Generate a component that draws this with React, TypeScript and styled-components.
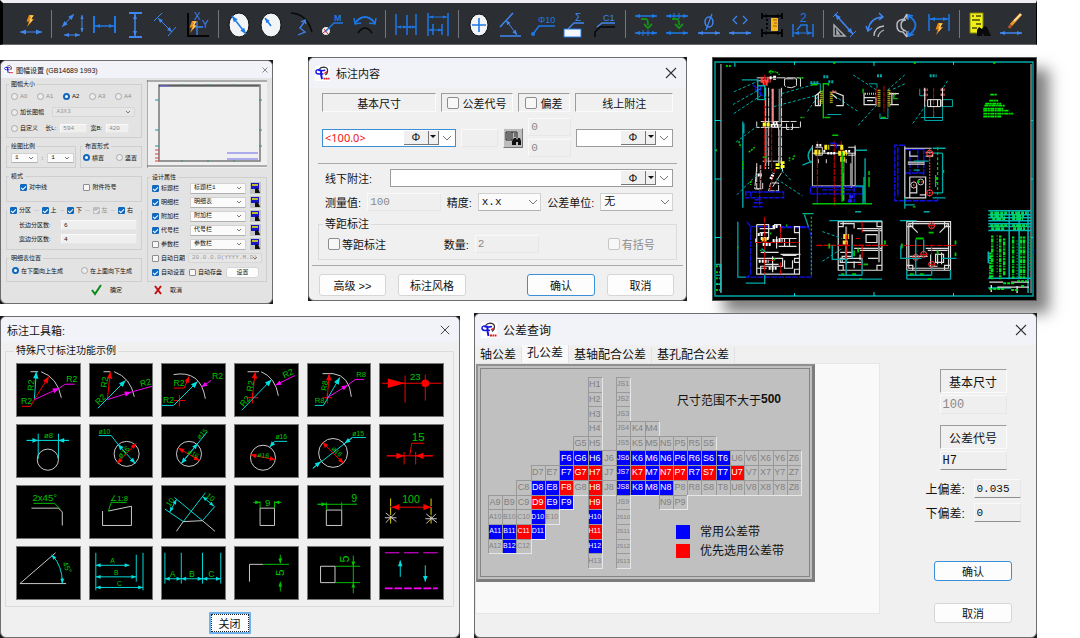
import React from 'react';
import styled, { createGlobalStyle, css } from 'styled-components';

const GlobalStyle = createGlobalStyle`
  * { box-sizing: border-box; }
  body { margin: 0; background: #fff; }
  button, input, select { font: inherit; color: inherit; }
`;

const BLUE = '#1e78e6';
const LBLUE = '#3f86f0';
const CYAN = '#00e0e0';
const GREEN = '#00c400';
const RED = '#f00';
const MAG = '#f0f';
const GREY = '#d0d0d0';

/* ---------- shared window parts ---------- */

const Page = styled.div`
  font-family: 'Liberation Sans', 'Noto Sans CJK SC', sans-serif;
  color: #111;
  padding-right: 43px;
  overflow: hidden;
`;

const TopRow = styled.div`
  display: flex;
  align-items: flex-start;
  padding-top: 12px;
`;

const BottomRow = styled.div`
  display: flex;
  align-items: flex-start;
  gap: 14px;
  padding-top: 9px;
`;

const Slot = styled.div<{ $w: number; $drop?: number; $after?: number }>`
  flex: ${p => p.$w} 1 0;
  min-width: 0;
  margin-top: ${p => p.$drop || 0}px;
  margin-right: ${p => p.$after || 0}px;
`;

const Frame = styled.section`
  background: #1a1a1a;
  position: relative;
`;

const Surface = styled.div<{ $h: number; $bg?: string }>`
  display: flex;
  flex-direction: column;
  min-height: ${p => p.$h}px;
  border: 1px solid #6e6e70;
  border-radius: 6px;
  background: ${p => p.$bg || '#f0f0f0'};
  overflow: hidden;
`;

const TitleBar = styled.header<{ $h: number; $size: number }>`
  display: flex;
  align-items: center;
  gap: ${p => (p.$h < 20 ? 0 : 3)}px;
  height: ${p => p.$h}px;
  padding: 0 ${p => (p.$h < 20 ? 4 : 9)}px 0 ${p => (p.$h < 30 ? 3 : 6)}px;
  background: #f2f3f9;
  font-size: ${p => p.$size}px;
  h2 { margin: 0; flex: 1; font: inherit; white-space: nowrap; padding-left: 3px; }
`;

const IconButton = styled.button`
  display: flex;
  padding: 0;
  border: 0;
  background: none;
`;

const CloseX = ({ s }: { s: number }) => (
  <IconButton aria-label="Close">
    <svg width={s + 2} height={s + 2} viewBox="0 0 12 12">
      <path d="M1 1L11 11M11 1L1 11" stroke="#333" strokeWidth="1.1" fill="none" />
    </svg>
  </IconButton>
);

const Logo = ({ s }: { s: number }) => (
  <svg width={s} height={s} viewBox="0 0 16 16">
    <rect width="16" height="16" fill="#fff" />
    <path d="M4.500 3.500Q6 1.200 9.500 1.200Q13.500 1.500 13.500 5Q13.500 8 11 9.500" stroke="#333" strokeWidth="1.300" fill="none" />
    <path d="M6.500 4.500Q1 3 1 6Q1 8.500 4 8.500Q7 8 9 8.500M3.500 4.500Q7 5.500 11 4.500" stroke="#1414e0" strokeWidth="1.500" fill="none" />
    <path d="M6.500 4.500Q6 9 7.500 14" stroke="#1414e0" strokeWidth="2" fill="none" />
    <path d="M10 8L13 6" stroke="#e01818" strokeWidth="1.500" fill="none" />
    <path d="M9 13.500H15.500" stroke="#e01818" strokeWidth="2" strokeDasharray="2 .5" fill="none" />
  </svg>
);

const Group = styled.fieldset<{ $h?: number; $line?: string }>`
  min-width: 0;
  min-height: ${p => p.$h || 0}px;
  margin: 0;
  padding: 0;
  border: 1px solid ${p => p.$line || '#dcdcdc'};
`;

const Legend = styled.legend<{ $lh: number; $left: number }>`
  margin-left: ${p => p.$left}px;
  padding: 0 2px;
  line-height: ${p => p.$lh}px;
  white-space: nowrap;
`;

const Check = styled.input<{ $s: number }>`
  appearance: none;
  flex: none;
  width: ${p => p.$s}px;
  height: ${p => p.$s}px;
  margin: 0;
  border: 1px solid #8d8d8d;
  border-radius: ${p => (p.$s > 8 ? 2 : 1)}px;
  background: #f7f7f7;
  &:disabled { border-color: #c6c6c6; }
  &:checked { background: #0f68bd; border-color: #0f68bd; }
  &:checked::before {
    content: '';
    display: block;
    width: 4px;
    height: 2px;
    border: solid #fff;
    border-width: 0 0 1px 1px;
    transform: rotate(-45deg);
    margin: 1px 0 0 0;
  }
  &:checked:disabled { background: #bdbdbd; border-color: #bdbdbd; }
`;

const Radio = styled.input`
  appearance: none;
  flex: none;
  width: 7px;
  height: 7px;
  margin: 0;
  border: 1px solid #a9a9a9;
  border-radius: 50%;
  background: #ededed;
  &:checked { border: 2px solid #0f68bd; background: #fff; }
`;

const Tick = styled.label<{ $w?: number; $dim?: boolean }>`
  display: flex;
  align-items: center;
  gap: 2px;
  white-space: nowrap;
  ${p => p.$w && css`flex: ${p.$w} 1 0; min-width: 0;`}
  ${p => p.$dim && css`color: #8d8d8d;`}
`;

const SelectWrap = styled.span<{ $w: number; $h: number }>`
  display: flex;
  align-items: center;
  flex: ${p => p.$w} 1 0;
  min-width: 0;
  height: ${p => p.$h}px;
  select {
    appearance: none;
    flex: 1;
    min-width: 0;
    height: 100%;
    padding: 0 3px;
    border: 1px solid #d2d2d2;
    border-bottom-color: #b0b0b0;
    border-radius: 1px;
    background: #fbfbfb;
    font-family: 'Liberation Mono', 'Noto Sans CJK SC', monospace;
  }
  select:disabled { background: #e6e6e6; border-color: #d6d6d6; color: #999; opacity: 1; }
`;

const Chevron = styled.svg<{ $pull?: boolean }>`
  flex: none;
  pointer-events: none;
  ${p => p.$pull && css`margin-left: -14px; margin-right: 2px;`}
`;

const Chev = ({ s, pull }: { s: number; pull?: boolean }) => (
  <Chevron $pull={pull} width={12} height={8} viewBox="0 0 12 8">
    <path d={s > 6 ? 'M2 2L6 6L10 2' : 'M5 3L7 5L9 3'} stroke="#777" fill="none" strokeWidth="1" />
  </Chevron>
);

const Pick = ({ value, w, h, label, off }: { value: string; w: number; h: number; label: string; off?: boolean }) => (
  <SelectWrap $w={w} $h={h}>
    <select aria-label={label} disabled={off} defaultValue={value}><option>{value}</option></select>
    <Chev s={h > 12 ? 9 : 5} pull />
  </SelectWrap>
);

const Field = styled.input<{ $w?: number; $h: number; $under?: boolean }>`
  flex: ${p => (p.$w ? `${p.$w} 1 0` : 'none')};
  min-width: 0;
  height: ${p => p.$h}px;
  padding: 0 2px;
  border: 1px solid #e7e7e7;
  border-top-color: #fafafa;
  border-left-color: #fafafa;
  background: #efefef;
  font-family: 'Liberation Mono', monospace;
  &:disabled { color: #8a8a8a; }
  ${p => p.$under && css`border-bottom-color: #8f8f8f;`}
`;

const PushButton = styled.button<{ $w: number; $h: number; $main?: boolean; $focus?: boolean }>`
  width: ${p => p.$w}px;
  height: ${p => p.$h}px;
  padding: 0;
  border: 1px solid ${p => (p.$main ? '#3a8fd6' : '#d6d6d6')};
  border-radius: 3px;
  background: #fdfdfd;
  white-space: nowrap;
  ${p => p.$focus && css`outline: 1px dotted #222; outline-offset: -3px; border-width: 2px; border-color: #6db0ea; border-radius: 1px;`}
`;

/* ---------- drawing helpers ---------- */

type ArrowProps = { p: number[]; c: string; both?: boolean; s?: number; w?: number };

const head = (x: number, y: number, a: number, s: number) => {
  const pt = (d: number, o: number) =>
    `${(x - d * Math.cos(a) - o * Math.sin(a)).toFixed(1)},${(y - d * Math.sin(a) + o * Math.cos(a)).toFixed(1)}`;
  return `${x},${y} ${pt(s, s * 0.4)} ${pt(s, -s * 0.4)}`;
};

const Arrow = ({ p, c, both, s = 6, w = 1 }: ArrowProps) => {
  const [x1, y1, x2, y2] = p;
  const a = Math.atan2(y2 - y1, x2 - x1);
  return (
    <g stroke="none" fill={c}>
      <line x1={x1} y1={y1} x2={x2} y2={y2} stroke={c} strokeWidth={w} />
      <polygon points={head(x2, y2, a, s)} />
      {both && <polygon points={head(x1, y1, a + Math.PI, s)} />}
    </g>
  );
};

const P = ({ d, c, w = 1, f = 'none', dash }: { d: string; c: string; w?: number; f?: string; dash?: string }) => (
  <path d={d} stroke={c} strokeWidth={w} fill={f} strokeDasharray={dash} />
);

const Label = ({ x, y, t, r = 0, s = 9, c = GREEN }: { x: number; y: number; t: string; r?: number; s?: number; c?: string }) => (
  <text x={x} y={y} fontSize={s} fill={c} transform={r ? `rotate(${r} ${x} ${y})` : undefined}>{t}</text>
);

/* ---------- toolbar ---------- */

const Toolbar = styled.nav`
  display: flex;
  align-items: center;
  height: 45px;
  padding: 0 9px 0 12px;
  border-top: 3px solid #eeeef2;
  border-left: 3px solid #000;
  border-right: 1px solid #000;
  border-bottom: 1px solid #6a6a6a;
  background: #2b2e33;
`;

const Tool = styled.button`
  display: flex;
  justify-content: center;
  flex: 31 1 0;
  min-width: 0;
  padding: 0;
  border: 0;
  background: none;
`;

const Split = styled.span`
  flex: 10 1 0;
  height: 28px;
  display: flex;
  justify-content: center;
  &::before { content: ''; width: 1px; background: #74777b; }
`;

const Bolt = ({ x, y }: { x: number; y: number }) => (
  <g transform={`translate(${x} ${y})`}>
    <path d="M3 0H8L5.500 4H8L1 12L3 6.500H.5Z" fill="#e88a1a" />
    <path d="M4 1H6.500L4 5H6L3.500 8" stroke="#ffe07a" fill="none" />
  </g>
);

const disc = <ellipse cx="14" cy="15" rx="10" ry="12" fill="#f2f4f6" stroke="#111" />;
const bend = <path d="M9 9H14Q16 9 16 15M12 14L16 18L20 14" stroke="#1a8a1a" strokeWidth="2" fill="none" />;

const toolIcons: (React.ReactNode | null)[] = [
  <><Bolt x={9} y={5} /><Arrow p={[3, 22, 25, 22]} c={LBLUE} both /></>,
  null,
  <><Arrow p={[4, 17, 16, 4]} c={LBLUE} both /><Arrow p={[24, 5, 24, 22]} c={LBLUE} both s={4} /><Arrow p={[6, 25, 22, 25]} c={LBLUE} both s={5} /></>,
  <><P d="M4 6V23M25 6V23" c={BLUE} w={2} /><Arrow p={[5, 16, 24, 16]} c={BLUE} both s={5} w={1.5} /></>,
  <><P d="M8 3H21M8 27H21" c={LBLUE} w={2} /><Arrow p={[14, 4, 14, 26]} c={LBLUE} both s={5} w={1.5} /></>,
  <><P d="M2 11L10 3M16 26L24 17" c={LBLUE} /><Arrow p={[6, 8, 20, 22]} c={LBLUE} both s={5} /></>,
  <><P d="M4 3V26H25" c="#050505" w={2} /><P d="M13 11V25M9 17H19" c={LBLUE} w={1.3} /><Label x={10} y={10} t="X" s={10} c={LBLUE} /><Label x={18} y={18} t="Y" s={10} c={LBLUE} /><Bolt x={5} y={11} /></>,
  null,
  <>{disc}<Arrow p={[7, 6, 21, 24]} c={BLUE} both w={1.5} /></>,
  <>{disc}<Arrow p={[14, 16, 8, 8]} c={BLUE} s={5} w={1.5} /></>,
  <><P d="M3 3Q19 4 24 22" c="#0a0a0a" w={1.5} /><P d="M10 25L17 22L12 18L17 11M13 12L17 10L18 14" c={LBLUE} w={1.3} /></>,
  <><circle cx="7" cy="21" r="4.5" fill="#eee" stroke="#222" /><P d="M4 23L10 18M5 19L9 24" c="#e02020" /><P d="M6 22L15 13H24" c={BLUE} w={1.4} /><text x="15" y="11" fontSize="9" fontWeight="bold" fill={BLUE}>M</text></>,
  <><P d="M4 13Q14 1 24 13" c={BLUE} w={1.8} /><P d="M3 8L4 14L10 13M25 8L24 14L18 13" c={BLUE} w={1.5} /><P d="M7 23Q14 13 21 23" c="#0a0a0a" w={1.6} /></>,
  null,
  <><P d="M4 4V25M15 5V25M24 4V25" c={BLUE} w={1.5} /><Arrow p={[5, 17, 15, 17]} c={BLUE} both s={4} /><Arrow p={[15, 17, 24, 17]} c={BLUE} both s={4} /></>,
  <><P d="M4 3V26M24 3V26M9 14V25M18 14V25" c={BLUE} w={1.5} /><Arrow p={[5, 7, 23, 7]} c={BLUE} both s={4} /><Arrow p={[5, 20, 18, 20]} c={BLUE} both s={4} /></>,
  null,
  <><ellipse cx="14" cy="15" rx="9" ry="11" fill="#f2f4f6" stroke="#111" /><P d="M7 15H21M14 8V22" c={BLUE} w={1.6} /></>,
  <><P d="M4 26H25M4 17L17 3" c={LBLUE} w={1.5} /><Arrow p={[10, 10, 21, 25]} c={LBLUE} both s={5} /></>,
  <><circle cx="5" cy="24" r="2" fill={BLUE} /><P d="M5 24L11 16H27" c={BLUE} w={1.5} /><Label x={10} y={13} t="Φ10" s={9} c={BLUE} /></>,
  <><rect x="5" y="19" width="17" height="8" fill="#f5f8ff" stroke={BLUE} /><P d="M9 19L15 13H25" c={LBLUE} w={1.4} /><Label x={16} y={11} t="Σ" s={10} c={LBLUE} /></>,
  <><P d="M6 17L11 13H24" c={LBLUE} w={1.5} /><Label x={12} y={11} t="C1" s={9} c={LBLUE} /><P d="M4 27V22L9 17H24" c="#070707" w={1.5} /></>,
  null,
  <><Arrow p={[3, 6, 25, 6]} c={BLUE} both s={5} w={1.5} /><Arrow p={[3, 23, 25, 23]} c={BLUE} both s={5} w={1.5} /><P d="M11 20V26M16 20V26" c={BLUE} />{bend}</>,
  <><Arrow p={[3, 6, 25, 6]} c={BLUE} both s={5} w={1.5} /><P d="M11 3V9M16 3V9" c={BLUE} /><Arrow p={[3, 23, 25, 23]} c={BLUE} both s={5} w={1.5} />{bend}</>,
  <><ellipse cx="14" cy="12" rx="4" ry="5" stroke={LBLUE} strokeWidth="1.500" fill="none" /><P d="M17 4L11 20" c={LBLUE} w={1.3} /><Arrow p={[3, 23, 25, 23]} c={LBLUE} both s={5} w={1.5} /></>,
  <><P d="M11 6L7 10L11 14M17 6L21 10L17 14" c={LBLUE} w={1.2} /><Arrow p={[3, 23, 25, 23]} c={LBLUE} both s={5} w={1.5} /></>,
  <><P d="M4 3V9M24 3V9M4 19V27M24 19V27" c="#050505" w={2} /><P d="M9 9V21" c="#050505" w={2} dash="2 2" /><Arrow p={[4, 6, 24, 6]} c="#050505" both s={5} w={2} /><Arrow p={[4, 23, 24, 23]} c="#050505" both s={5} w={2} /><rect x="13" y="8" width="7" height="13" fill="#f5b81a" /><P d="M19 10H15M19 13H16M19 16H15" c="#a05800" /></>,
  <><Label x={11} y={12} t="2" s={12} c={BLUE} /><P d="M4 14V27M24 14V27M8 20L12 15H18V22" c={BLUE} w={1.5} /><Arrow p={[5, 23, 23, 23]} c={BLUE} both s={5} /></>,
  null,
  <><P d="M4 15V26H15ZM7 21V24H9Z" c="#a9adb2" w={1.5} /><Arrow p={[5, 4, 23, 24]} c={LBLUE} both w={1.6} /><P d="M3 7L8 2M20 27L26 21" c={LBLUE} /></>,
  <><P d="M6 20Q8 8 20 7M4 16L6 21L10 18M17 3L21 7L17 10" c={LBLUE} w={1.5} /><P d="M12 26Q12 17 22 16M16 27Q17 22 22 20" c="#b6b9bd" w={1.3} /></>,
  <><P d="M14 4L11 9Q3 10 4 16Q4 22 10 22L14 27M13 10Q8 10 8 15Q8 20 13 21M14 4V9M14 27V21" c="#b9bcc0" w={1.5} /><P d="M16 6Q29 15 16 25M15 10L16 5L20 6M15 21L16 26L21 24" c={BLUE} w={1.8} /></>,
  <><P d="M4 4V21M24 4V21" c={BLUE} w={1.5} /><Arrow p={[5, 9, 23, 9]} c={BLUE} both s={5} w={1.5} /><Bolt x={10} y={13} /></>,
  null,
  <><path d="M4 3H17V23H4Z" fill="#f0ee16" stroke="#8a8800" /><P d="M6 6H8M10 6H15M6 10H14M10 14H15M6 18H11" c="#4a4a10" w={1.5} /><path d="M11 20L13 17L16 19L18 16L21 17L25 26H18L17 23L16 26H11Z" fill="#0a0a0a" /></>,
  <><P d="M24 4L14 15" c="#f09a2a" w={3} /><P d="M24 4L17 11" c="#ffeeb8" w={1.5} /><P d="M14 15L12 18" c="#b5562a" w={3} /><Arrow p={[3, 23, 25, 23]} c={LBLUE} both s={5} w={1.5} /></>,
];

/* ---------- sheet settings dialog ---------- */

const SmallText = styled.div`
  font-size: 6px;
  line-height: 8px;
`;

const SheetBody = styled.div`
  display: flex;
  gap: 5px;
  padding: 2px 5px 0;
`;

const Column = styled.div<{ $w: number; $gap: number }>`
  display: flex;
  flex-direction: column;
  gap: ${p => p.$gap}px;
  flex: ${p => p.$w} 1 0;
  min-width: 0;
`;

const Line = styled.div<{ $h: number; $gap?: number; $l?: number; $r?: number }>`
  display: flex;
  align-items: center;
  gap: ${p => p.$gap ?? 4}px;
  height: ${p => p.$h}px;
  padding: 0 ${p => p.$r ?? 4}px 0 ${p => p.$l ?? 4}px;
  white-space: nowrap;
`;

const Pair = styled.div`
  display: flex;
  gap: 4px;
`;

const Share = styled(Group)<{ $w: number }>`
  flex: ${p => p.$w} 1 0;
`;

const Rule = styled.span`
  flex: 1;
  height: 1px;
  background: #cfcfcf;
`;

const ZoneLegend = styled.legend`
  display: flex;
  align-items: center;
  gap: 3px;
  width: 100%;
  padding: 0 8px 0 3px;
  line-height: 8px;
`;

const ZoneBody = styled.div`
  padding-top: 4px;
`;

const Caption = styled.span<{ $w: number }>`
  flex: none;
  width: ${p => p.$w}px;
`;

const Preview = styled.svg`
  display: block;
  width: 100%;
  height: 88px;
  background: #f0f0f0;
`;

const SheetFooter = styled.footer`
  display: flex;
  justify-content: center;
  gap: 32px;
  padding: 2px 0 3px;
  button { display: flex; align-items: center; gap: 8px; padding: 0; border: 0; background: none; }
`;

const Swatch = styled.svg`
  flex: none;
`;

const PaletteIcon = () => (
  <Swatch width="11" height="12" viewBox="0 0 11 12">
    <rect width="11" height="12" fill="#c4c4c4" />
    <rect x="1" y="1" width="8" height="6" fill="#1616c8" />
    <path d="M2 3H8" stroke="#f4f000" strokeWidth="1.500" />
    <path d="M5 11V7L8 6L10 11Z" fill="#111" />
  </Swatch>
);

const attributes = [
  { label: '标题栏', value: '标题栏1', on: true },
  { label: '明细栏', value: '明细表', on: true },
  { label: '附加栏', value: '附加栏', on: true },
  { label: '代号栏', value: '代号栏', on: true },
  { label: '参数栏', value: '参数栏', on: false },
];

const SheetDialog = () => (
  <Frame>
    <Surface $h={244} $bg="#e3e3e3">
      <TitleBar $h={17} $size={7}>
        <Logo s={9} /><h2>图幅设置 (GB14689 1993)</h2><CloseX s={4} />
      </TitleBar>
      <SmallText>
        <SheetBody>
          <Column $w={136} $gap={4}>
            <Group $h={58} $line="#cfcfcf">
              <Legend $lh={8} $left={2}>图幅大小</Legend>
              <Line $h={16}>
                {['A0', 'A1', 'A2', 'A3', 'A4'].map(a => (
                  <Tick key={a} $w={27} $dim={a !== 'A2'}><Radio type="radio" name="size" defaultChecked={a === 'A2'} />{a}</Tick>
                ))}
              </Line>
              <Line $h={16} $r={6}>
                <Tick $w={38}><Radio type="radio" name="size" />加长图幅</Tick>
                <Pick w={84} h={10} value="A3X3" label="加长图幅" off />
              </Line>
              <Line $h={16} $r={12}>
                <Tick $w={36}><Radio type="radio" name="size" />自定义</Tick>
                <span>长L:</span><Field $w={24} $h={9} disabled aria-label="长" defaultValue="594" />
                <span>宽B:</span><Field $w={20} $h={9} disabled aria-label="宽" defaultValue="420" />
              </Line>
            </Group>
            <Pair>
              <Share $w={70} $h={26} $line="#cfcfcf">
                <Legend $lh={8} $left={2}>绘图比例</Legend>
                <Line $h={15} $r={1}><Pick w={25} h={10} value="1" label="比例" /><span>:</span><Pick w={25} h={10} value="1" label="比例值" /></Line>
              </Share>
              <Share $w={62} $h={26} $line="#cfcfcf">
                <Legend $lh={8} $left={2}>布置形式</Legend>
                <Line $h={15} $l={2} $r={0}>
                  <Tick $w={30}><Radio type="radio" name="dir" defaultChecked />横置</Tick>
                  <Tick $w={26}><Radio type="radio" name="dir" />竖置</Tick>
                </Line>
              </Share>
            </Pair>
            <Group $h={30} $line="#cfcfcf">
              <Legend $lh={8} $left={2}>模式</Legend>
              <Line $h={14} $l={13}>
                <Tick $w={60}><Check $s={7} type="checkbox" defaultChecked />对中线</Tick>
                <Tick $w={54}><Check $s={7} type="checkbox" />附件符号</Tick>
              </Line>
            </Group>
            <Group $h={44} $line="#cfcfcf">
              <ZoneLegend>
                {['分区', '上', '下', '左', '右'].map((t, i) => (
                  <React.Fragment key={t}>
                    {i > 0 && <Rule />}
                    <Tick $dim={t === '左'}><Check $s={7} type="checkbox" defaultChecked disabled={t === '左'} />{t}</Tick>
                  </React.Fragment>
                ))}
              </ZoneLegend>
              <ZoneBody>
                <Line $h={14} $l={12}><Caption $w={38}>长边分区数:</Caption><Field $w={75} $h={10} aria-label="长边分区数" defaultValue="6" /></Line>
                <Line $h={14} $l={12}><Caption $w={38}>宽边分区数:</Caption><Field $w={75} $h={10} aria-label="宽边分区数" defaultValue="4" /></Line>
              </ZoneBody>
            </Group>
            <Group $h={28} $line="#cfcfcf">
              <Legend $lh={8} $left={2}>明细表位置</Legend>
              <Line $h={17} $l={5}>
                <Tick $w={65}><Radio type="radio" name="pos" defaultChecked />在下面向上生成</Tick>
                <Tick $w={56}><Radio type="radio" name="pos" />在上面向下生成</Tick>
              </Line>
            </Group>
          </Column>
          <Column $w={120} $gap={5}>
            <Preview viewBox="0 0 120 88" preserveAspectRatio="none">
              <P d="M0 1H120M0 86H120M0 0V88" c="#666" />
              <P d="M12 5H113V81H12Z" c="#777" w={1.5} />
              <P d="M12 6H112" c="#222" />
              <P d="M13 6H22M80 73H111M80 79H111" c="#6868e8" w={1.2} />
              <P d="M8 20H12M8 50H12M8 66H12M112 20H115M112 50H115M112 66H115M35 4V6M61 4V6M87 4V6M35 80V82M61 80V82M87 80V82" c="#2a9090" />
              <P d="M8 70H12M8 74H12M8 78H12M8 81H12" c="#d04040" />
            </Preview>
            <Group $h={109} $line="#cfcfcf">
              <Legend $lh={8} $left={2}>设计属性</Legend>
              {attributes.map(a => (
                <Line key={a.label} $h={14} $r={5} $l={4}>
                  <Tick $w={34}><Check $s={7} type="checkbox" defaultChecked={a.on} />{a.label}</Tick>
                  <Pick w={56} h={11} value={a.value} label={a.label} />
                  <PaletteIcon />
                </Line>
              ))}
              <Line $h={14} $r={4} $gap={3}>
                <Tick><Check $s={7} type="checkbox" />自动日期</Tick>
                <Pick w={70} h={10} value="20.0.0.0(YYYY.M.D)" label="日期" off />
              </Line>
              <Line $h={14} $r={4} $gap={4}>
                <Tick><Check $s={7} type="checkbox" defaultChecked />自动设置</Tick>
                <Tick><Check $s={7} type="checkbox" />自动存盘</Tick>
                <PushButton $w={33} $h={11}>设置</PushButton>
              </Line>
            </Group>
          </Column>
        </SheetBody>
        <SheetFooter>
          <button><svg width="11" height="12" viewBox="0 0 11 12"><P d="M1 6L4 10L10 1" c="#0a8a1a" w={2} /></svg>确定</button>
          <button><svg width="8" height="10" viewBox="0 0 8 10"><P d="M1 1L7 9M7 1L1 9" c="#c01010" w={2} /></svg>取消</button>
        </SheetFooter>
      </SmallText>
    </Surface>
  </Frame>
);

/* ---------- dimension content dialog ---------- */

const ContentBody = styled.div`
  display: flex;
  flex-direction: column;
  gap: 5px;
  padding: 5px 9px 0;
  font-size: 11px;
`;

const Row = styled.div<{ $h: number; $gap: number }>`
  display: flex;
  align-items: center;
  gap: ${p => p.$gap}px;
  min-height: ${p => p.$h}px;
  padding: 0 4px;
  white-space: nowrap;
`;

const Sunken = styled.div<{ $w?: number; $h: number }>`
  display: flex;
  align-items: center;
  justify-content: center;
  gap: 3px;
  flex: ${p => (p.$w ? `${p.$w} 1 0` : 'none')};
  min-width: 0;
  height: ${p => p.$h}px;
  border: 1px solid #fbfbfb;
  border-top-color: #9c9c9c;
  border-left-color: #9c9c9c;
  white-space: nowrap;
`;

const Divider = styled.hr`
  width: 100%;
  height: 1px;
  margin: 0;
  border: 0;
  background: #a9a9a9;
`;

const ComboBox = styled.div<{ $w: number; $on?: boolean }>`
  display: flex;
  align-items: center;
  flex: ${p => p.$w} 1 0;
  min-width: 0;
  height: 18px;
  border: 1px solid ${p => (p.$on ? '#3a8fd6' : '#9c9c9c')};
  background: #fff;
  input { flex: 1; min-width: 0; width: 0; padding: 0 2px; border: 0; background: none; color: #f01414; font: 11px 'Noto Sans', sans-serif; }
`;

const Mini = styled.button<{ $w: number; $flat?: boolean }>`
  display: flex;
  align-items: center;
  justify-content: center;
  width: ${p => p.$w}px;
  height: 14px;
  padding: 0;
  border: 0;
  font-size: 11px;
  background: ${p => (p.$flat ? '#fff' : '#f0f0f0')};
  ${p => !p.$flat && css`border-right: 1px solid #777; border-bottom: 1px solid #777;`}
`;

const Combo = ({ w, value = '', on, label }: { w: number; value?: string; on?: boolean; label: string }) => (
  <ComboBox $w={w} $on={on}>
    <input aria-label={label} defaultValue={value} />
    <Mini $w={25}>Φ</Mini>
    <Mini $w={10} aria-label="Symbols"><svg width="6" height="4"><path d="M0 0H6L3 3Z" fill="#111" /></svg></Mini>
    <Mini $w={16} $flat aria-label="History"><Chev s={9} /></Mini>
  </ComboBox>
);

const LookupButton = styled.button`
  flex: none;
  width: 20px;
  height: 20px;
  padding: 0;
  border: 1px solid #777;
  border-top-color: #eee;
  border-left-color: #eee;
  background: #bdbdbd;
`;

const Stack = styled.div<{ $w: number }>`
  display: flex;
  flex-direction: column;
  gap: 3px;
  flex: ${p => p.$w} 1 0;
  min-width: 0;
`;

const Spread = styled.div<{ $w?: number }>`
  flex: ${p => p.$w || 1} 1 0;
`;

const Footer = styled.footer`
  display: flex;
  gap: 12px;
  padding: 8px 9px 4px 7px;
  margin: 5px 3px 0;
  border-top: 1px solid #a9a9a9;
  font-size: 11px;
`;

const ContentDialog = () => (
  <Frame>
    <Surface $h={244}>
      <TitleBar $h={30} $size={11}><Logo s={15} /><h2>标注内容</h2><CloseX s={10} /></TitleBar>
      <ContentBody>
        <Row $h={19} $gap={5}>
          <Sunken $w={115} $h={19}>基本尺寸</Sunken>
          <Sunken $w={71} $h={19} as="label"><Check $s={12} type="checkbox" />公差代号</Sunken>
          <Sunken $w={52} $h={19} as="label"><Check $s={12} type="checkbox" />偏差</Sunken>
          <Sunken $w={98} $h={19}>线上附注</Sunken>
        </Row>
        <Row $h={41} $gap={5}>
          <Combo w={135} value="<100.0>" on label="基本尺寸" />
          <Field $w={32} $h={18} disabled aria-label="公差代号" />
          <LookupButton aria-label="公差查询">
            <svg width="18" height="18" viewBox="0 0 18 18">
              <P d="M2 3H8V11H2ZM8 3H13V9M3 5H7M3 7H7M3 9H7M10 5H12M10 7H12" c="#222" />
              <path d="M8 16V12L10 9H12L13 11L14 9H16L17 12V16H14V13H12V16Z" fill="#111" />
            </svg>
          </LookupButton>
          <Stack $w={44}>
            <Field $h={18} disabled aria-label="上偏差" defaultValue="0" />
            <Field $h={18} disabled aria-label="下偏差" defaultValue="0" />
          </Stack>
          <Combo w={97} label="线上附注" />
        </Row>
        <Divider />
        <Row $h={18} $gap={8}><Caption $w={60}>&nbsp;线下附注:</Caption><Combo w={282} label="线下附注" /></Row>
        <Row $h={20} $gap={6}>
          <label htmlFor="measured">&nbsp;测量值:</label><Field id="measured" $w={65} $h={18} disabled defaultValue="100" />
          <span>精度:</span><Pick w={61} h={18} value="x.x" label="精度" />
          <span>公差单位:</span><Pick w={70} h={18} value="无" label="公差单位" />
        </Row>
        <Group $h={43}>
          <Legend $lh={14} $left={4}>等距标注</Legend>
          <Row $h={26} $gap={6}>
            <Tick $w={116}>&nbsp;<Check $s={12} type="checkbox" />等距标注</Tick>
            <label htmlFor="count">数量:</label><Field id="count" $w={59} $h={18} disabled defaultValue="2" />
            <Spread $w={57} />
            <Tick $w={65} $dim><Check $s={12} type="checkbox" disabled />有括号</Tick>
          </Row>
        </Group>
      </ContentBody>
      <Footer>
        <PushButton $w={67} $h={22}>高级 &gt;&gt;</PushButton>
        <PushButton $w={68} $h={22}>标注风格</PushButton>
        <Spread />
        <PushButton $w={68} $h={22} $main>确认</PushButton>
        <PushButton $w={67} $h={22}>取消</PushButton>
      </Footer>
    </Surface>
  </Frame>
);

/* ---------- assembly drawing ---------- */

const Drawing = styled.svg`
  display: block;
  width: 100%;
  height: 244px;
  background: #000;
  border: 1px solid #555;
  box-shadow: 12px 12px 14px 0 rgba(0, 0, 0, 0.5);
`;

const TEAL = '#00a8a8';
const NAVY = '#1010e0';

const Sheet = () => (
  <Drawing viewBox="0 0 325 244" preserveAspectRatio="none">
    <P d="M2 4H322V240H2Z" c={TEAL} w={1.4} />
    <P d="M8 6V237M320 6V237" c="#ccc" />
    <P d="M82 4V7M162 4V8M242 4V7M82 240V237M162 240V236M242 240V237M2 63H8M2 122H8M2 181H8M320 63H322M320 122H322M320 181H322" c={CYAN} />
    <P d="M13 8H18M3 210H7M3 216H7M3 222H7M3 228H7M3 234H7M2 93H5M122 4V6M203 4V6M283 4V6" c={GREEN} w={2} dash="2 1" />
    <P d="M3 208H8V236M3 219H8M3 228H8M22 5V9" c={CYAN} />
    {/* column elevation */}
    <P d="M53 30V112M56 30V112M69 30V112M66 70V110M44 20H88M88 20V30M72 21H84V28Q78 32 72 28ZM44 23H52V30M48 64H84M44 64V70H88V64M74 66V72H80V66M50 104H70M44 106V132H48V108M70 106V114L60 130M44 110L42 132H50V126M58 126H66V134H56Z" c="#ddd" dash="9 1" />
    <P d="M67 31V65M53 71V106M67 72V106" c="#777" w={2} />
    <P d="M60 31V65" c="#f79a9a" w={2.2} />
    <P d="M48 22H58M50 25H56" c="#f44" w={6} dash="2 1" />
    <P d="M52 17V112M59 34V114M47 108V148M62 112L57 134M55 71V105" c="#d00000" dash="5 1" />
    <P d="M50 67H57M65 106V112M70 104V112" c="#ff2" w={4} dash="3 1" />
    <P d="M57 20H60M62 18V22M60 66H66M58 68H68M45 118H49M58 122L61 116" c="#fff" w={3} dash="2 1" />
    <P d="M33 135H71V141H33ZM38 135V141M40 27L46 32M42 31L50 38M48 28V38M40 150H50M41 146H50M42 143H49" c={NAVY} w={1.5} dash="5 1" />
    <P d="M30 64V151M31 66V76M29 22H46M45 24V42H52V28H45" c={TEAL} w={1.4} />
    <P d="M21 34L46 23M20 47L48 31M21 56L48 38M69 36L104 26M61 49L103 38M23 85L44 69M24 138L44 118M66 110L79 124M64 122L90 139" c={TEAL} dash="3 2" />
    <P d="M56 14H63M26 84L28 90M36 95L42 90M77 100V104M82 98L80 103M58 12V16M64 14L67 17M86 20H92M88 60H92M30 104V112M50 100H54M38 124V128" c={GREEN} w={1.6} dash="2 1" />
    {/* section views */}
    <P d="M111 19H117M165 18H171M218 18H225M98 25H106M116 24H121" c={TEAL} w={3} dash="2 1" />
    <P d="M98 26H108V35M115 57H129M157 26H165V30M208 31V38H212M230 42H241V49H230ZM213 49V63H231V49M209 60H231M222 53V60M168 56V61H176V50" c={TEAL} />
    <P d="M95 54L106 38M122 38L146 54M141 17L164 32M193 17L176 32M193 26L180 32M146 68L166 46M236 23L231 31M201 66L214 48" c={TEAL} dash="3 2" />
    <P d="M111 61V26H116V28M99 27H105M112 60H118M169 60H174M182 36V41H186M151 31V35" c={GREEN} w={1.4} />
    <P d="M108 34L103 38V48H108V42M121 34L131 38V48H124M106 36V48M119 36L125 41M152 35V47H164V40H152M178 36H187M178 47H187M180 35V47M155 43H161" c="#e0e0e0" w={1.2} />
    <P d="M109 33V46M119 34V46M167 32V49M177 32V49" c="#d8d020" w={3} dash="1 1" />
    <P d="M153 36H164M177 36H184" c="#d8d020" w={2} dash="1 1" />
    <P d="M172 28V54M164 30V48M222 30V58M214 32V44M231 32V44" c="#e00000" dash="5 1" />
    <P d="M120 34H124M212 32H216M212 37H216M229 32H233M229 37H233" c="#f66" w={2.5} dash="2 1" />
    <P d="M213 30V49M231 30V49M216 42H229V49H216ZM219 42V49M226 42V49" c="#eee" />
    <P d="M279 37H286M278 43H287M274 46H290M273 48H294M272 51H292M272 53H298M272 56H302M272 59H290" c="#00e800" w={1.8} dash="4 .5 2 .5" />
    {/* second elevation */}
    <P d="M100 88V129H103M143 88V129H138M100 96H143M103 90H110V98H103M136 90H143V98H136M118 88H128M106 102V106M114 102V106M134 102V106M140 96V129M103 129H143" c="#ddd" />
    <P d="M139 106V131M131 102V144" c="#888" w={2.5} />
    <P d="M105 84V148M122 84V149M129 84V140M131 90V116" c="#e00000" dash="6 1" />
    <P d="M102 95H108M112 90H117M126 96H135M128 90H132M128 102H133" c="#ffe920" w={5} dash="3 1" />
    <P d="M104 88H109M115 96H124M133 94H138M111 94H114" c="#fff" w={2.5} dash="2 1" />
    <P d="M98 130H151V137H98ZM105 130V147M110 133H142M118 86H124V92M138 137V147M142 130V146" c={NAVY} w={1.4} dash="5 1" />
    <P d="M137 140H141M136 144H140" c="#2424ff" w={3} />
    <P d="M100 147H160M130 95V145M157 114V118M157 120V130M152 120V144M120 78H126" c={GREEN} w={1.5} />
    <P d="M144 93H155M153 101V147M143 129H151V147M100 90Q92 98 99 106M90 108L100 104" c={TEAL} w={1.4} />
    {/* side view */}
    <P d="M193 88H183V144H226V140M186 90V140M198 91V118M206 91V116M212 91V118M193 92H212M193 116H212" c={NAVY} w={1.5} dash="6 1" />
    <P d="M193 89V141H214M193 91H220M198 94V99H206M196 105H213M196 107H213M198 120H214V141H198ZM198 120V128M205 128V136H198M214 95H221V99H214M208 138H214V133" c="#ddd" w={1.2} />
    <circle cx="202" cy="128" r="3" fill="none" stroke="#ccc" /><circle cx="209" cy="125" r="3" fill="none" stroke="#ccc" />
    <P d="M214 96H222M218 92V100M214 136H222M218 132V140M202 124V132M206 125H212M218 99V132" c="#f03030" w={1.3} dash="2 1" />
    <circle cx="218" cy="96" r="3" fill="none" stroke="#f33" /><circle cx="218" cy="136" r="3" fill="none" stroke="#f33" />
    <P d="M221 91H234M221 141H234M231 96V136M222 96H231M222 136H231M224 118V130M193 141V152M193 148H203M202 104H217M202 113H208" c={TEAL} w={1.3} />
    <P d="M226 90V140M232 113V118M201 150H206M207 123V128M225 120V126" c={GREEN} w={1.3} dash="3 2" />
    {/* plan views */}
    <P d="M34 165L38 170V218L34 221H99V220M38 170H96L99 180V220M67 171H96" c={NAVY} w={1.3} dash="6 1" />
    <P d="M44 168H56V172H62V168H68V176M44 168V218H87V176M47 176H56V182M43 182V186M66 182H84M66 190H84M64 180V192M72 182V190H77V182M48 196H66M44 202H70V210H48V218M60 200V216M44 212H54M68 198H88M70 199H84M72 204V212H80V204M82 170H87V176H82ZM82 202H87V206H82ZM82 213H87V218H82ZM52 208H66M56 172V180M47 172H56" c="#e0e0e0" w={1.2} />
    <P d="M48 182H56M50 188H58M60 170H66M60 184H70M46 205H56M56 212H64M45 178H50" c="#fff" w={3} dash="2 1" />
    <P d="M52 160V228M43 186H87M68 170V182M68 206V218M56 204H62" c="#e00000" dash="6 1" />
    <P d="M49 183H54" c="#ffd020" w={4} dash="2 1" />
    <P d="M25 165V221H33M33 227H52M90 157H101M92 158L96 170M49 192L53 196M52 218V228" c={TEAL} w={1.3} />
    <P d="M99 160V218M25 190V194M58 176V180M74 168V172M62 202V206M47 194H52M93 157H98" c={GREEN} w={1.3} dash="2 2" />
    <P d="M126 165H170V214H126ZM128 167H142V172M140 178V200H130V206M142 192H170M148 194H170M154 178H165V186H154ZM145 172H170V174H150M128 196H140M128 202H150V206H128ZM156 202H168M142 205V212M148 198V204M126 165H131V170H126ZM165 165H170V170H165ZM126 209H131V214H126ZM165 209H170V214H165Z" c="#ddd" w={1.2} />
    <P d="M167 172V206M134 170V208" c="#888" w={2} />
    <P d="M131 180H137M133 184V188" c="#ffe040" w={5} dash="4 1" />
    <P d="M104 189H176M150 165V176M134 178V220M150 188V214M146 208H154M144 182H148" c="#e00000" w={1.2} dash="6 1" />
    <P d="M117 164H170M120 189V203H136M126 219H150M125 223H170M134 203V219M150 203V219M143 155H149M140 188V202" c={TEAL} w={1.4} />
    <P d="M110 175L130 182M110 205L130 192" c={TEAL} dash="3 2" />
    <P d="M129 218H132M140 218H144M147 223H150M117 187V192M173 184V188M142 194V200M152 208H156M146 192V196" c={GREEN} w={1.8} />
    <P d="M195 165H239V214H195ZM197 167H237V212H197ZM198 168L206 176M236 168L228 176M214 192H237M216 194H236M224 198H232V206H224ZM198 200H216M219 198V210H226M195 165H201V170H195ZM233 165H239V170H233ZM195 209H201V214H195ZM233 209H239V214H233ZM226 196V208M230 196V208" c="#ddd" w={1.2} />
    {[[220, 169], [204, 201], [212, 198], [220, 208]].map(([x, y]) => (
      <g key={`${x}-${y}`}><circle cx={x} cy={y} r="3" fill="none" stroke="#f55" /><P d={`M${x - 4} ${y}H${x + 4}M${x} ${y - 4}V${y + 4}`} c="#e00000" /></g>
    ))}
    <P d="M190 189H244M220 189V198" c="#e00000" dash="6 1" />
    <P d="M188 164H205M195 219H220M195 223H239M204 183V219M212 183V196M220 210V219M189 189V202H210M230 202H245M212 155H218M195 214V223M239 214V223" c={TEAL} w={1.4} />
    <P d="M198 218H202M208 218H212M216 223H220M190 187V192M244 184V188M204 182H212M217 176H222M226 194V198M244 196V200" c={GREEN} w={1.8} />
    {/* parts list and title block */}
    <P d="M277 154H320M277 158H320M277 161H320M277 164H320M277 167H320M277 170H320M277 174H320M277 222H320M298 154V223M308 154V223M317 154V237M277 195V207M277 232H300" c="#00b8b8" w={1.5} />
    <P d="M279 156H296M279 159H294M300 156H316M301 159H313M279 169H296M280 172H294M301 169H316M302 172H314M281 162H294M301 162H312" c="#00d858" w={2.6} dash="3 1 5 1" />
    <P d="M281 179V223M289 179V223M293 182V220M302 180V222M310 180V223M313 180V222M279 196V222" c="#00e020" w={2.4} dash="2 1 4 1 1 1" />
    <P d="M286 179V218M306 184V222M319 180V216" c="#00b020" w={1.6} dash="1 2" />
    <P d="M278 226H292M280 229V236M286 231H318M300 226H318M306 237V230" c="#ddd" w={1.4} />
    <P d="M292 227H304M278 233H294M306 225H316M310 230H314M300 234H308" c="#00e020" w={2} dash="3 1" />
    <P d="M322 196L324 194" c={NAVY} />
  </Drawing>
);

/* ---------- dimension toolbox ---------- */

const ToolboxBody = styled.div`
  display: flex;
  flex-direction: column;
  gap: 5px;
  align-items: stretch;
  padding: 3px 5px 3px 4px;
  font-size: 10px;
`;

const Thumbs = styled.div`
  display: grid;
  grid-template-columns: repeat(6, minmax(0, 1fr));
  gap: 7px 8px;
  padding: 6px 9px 6px 10px;
`;

const Thumb = styled.button`
  display: flex;
  height: 54px;
  padding: 0;
  border: 1px solid #777;
  background: #000;
  svg { width: 100%; height: 100%; font-family: 'Liberation Sans', sans-serif; }
`;

const ring = (x: number, y: number, r: number) => <circle cx={x} cy={y} r={r} fill="none" stroke={GREY} />;

const samples: { name: string; art: React.ReactNode }[] = [
  { name: '半径 1', art: <><P d="M14 8H22M25 8Q42 14 46 35" c={GREY} /><Arrow p={[18, 37, 20, 8]} c={CYAN} s={7} /><Arrow p={[18, 37, 33, 13]} c={RED} s={7} /><Arrow p={[18, 37, 44, 25]} c={MAG} s={7} /><P d="M44 25L50 21H60" c={MAG} /><P d="M5 44H14L18 37" c={RED} /><Label x={51} y={19} t="R2" /><Label x={17} y={28} t="R2" r={-85} /><Label x={4} y={42} t="R2" /></> },
  { name: '半径 2', art: <><P d="M14 8H21M25 8Q42 14 46 34" c={GREY} /><Arrow p={[18, 37, 21, 8]} c={RED} s={7} /><Arrow p={[8, 46, 37, 17]} c={CYAN} s={7} /><Arrow p={[18, 37, 43, 29]} c={MAG} s={7} /><P d="M43 29L65 23" c={MAG} /><Label x={17} y={25} t="R2" r={-80} /><Label x={9} y={43} t="R2" r={-45} /><Label x={53} y={24} t="R2" r={-15} /></> },
  { name: '半径 3', art: <><P d="M12 11Q40 6 45 36" c={GREY} /><Arrow p={[23, 25, 28, 13]} c={RED} s={6} /><P d="M12 25H23M12 38H24M18 32V44" c={RED} /><Arrow p={[12, 43, 37, 18]} c={CYAN} s={7} /><P d="M0 43H12" c={CYAN} /><Arrow p={[51, 17, 41, 24]} c={MAG} /><Label x={12} y={23} t="R2" /><Label x={1} y={41} t="R2" /><Label x={52} y={16} t="R2" /></> },
  { name: '半径 4', art: <><P d="M13 8H25M27 8Q42 14 45 33" c={GREY} /><Arrow p={[18, 35, 21, 8]} c={RED} s={7} /><P d="M12 35H24M18 30V41" c={RED} /><Arrow p={[7, 48, 38, 16]} c={CYAN} s={7} /><Arrow p={[62, 12, 42, 22]} c={MAG} /><Label x={18} y={29} t="R2" r={-80} /><Label x={9} y={45} t="R2" r={-50} /><Label x={51} y={15} t="R2" r={-25} /></> },
  { name: '半径 5', art: <><P d="M15 10H26Q43 12 45 34" c={GREY} /><Arrow p={[20, 35, 22, 10]} c={RED} s={7} /><P d="M15 35H25M20 30V41" c={RED} /><Arrow p={[16, 43, 33, 14]} c={CYAN} s={7} /><P d="M7 43H16" c={CYAN} /><Arrow p={[20, 35, 41, 22]} c={MAG} /><P d="M41 22L49 16H58" c={MAG} /><Label x={50} y={14} t="R8" s={8} /><Label x={19} y={28} t="R8" r={-80} s={8} /><Label x={7} y={41} t="R8" s={8} /></> },
  { name: '基准', art: <><P d="M2 20H64M26 12V40M47 11V38" c={RED} /><path d="M8 15V25L26 20Z" fill={RED} /><circle cx="47" cy="20" r="4" fill={RED} /><Label x={31} y={17} t="23" s={10} /></> },
  { name: '直径 1', art: <><P d="M22 9V35M43 9V35M10 16H54" c={CYAN} /><Arrow p={[10, 16, 22, 16]} c={CYAN} /><Arrow p={[54, 16, 43, 16]} c={CYAN} />{ring(32, 36, 11)}<Label x={28} y={14} t="ø8" s={8} /></> },
  { name: '直径 2', art: <>{ring(38, 30, 13)}<P d="M9 11H22L29 20" c={CYAN} /><Arrow p={[29, 20, 47, 40]} c={CYAN} both /><Arrow p={[28, 40, 48, 19]} c={RED} both /><Label x={9} y={9} t="ø10" s={7} /><Label x={32} y={35} t="ø16" r={-45} s={8} /></> },
  { name: '直径 3', art: <>{ring(28, 30, 13)}<P d="M20 40L47 7" c={CYAN} /><Arrow p={[20, 40, 37, 19]} c={CYAN} both /><Arrow p={[17, 24, 39, 37]} c={RED} both /><Label x={39} y={15} t="ø15" r={-45} s={7} /><Label x={26} y={29} t="ø16" r={30} s={7} /></> },
  { name: '直径 4', art: <>{ring(29, 34, 13)}<Arrow p={[16, 31, 42, 36]} c={RED} both /><Arrow p={[41, 17, 36, 23]} c={CYAN} /><P d="M41 17H54" c={CYAN} /><Label x={42} y={15} t="ø16" s={7} /><Label x={23} y={33} t="ø16" r={8} s={7} /></> },
  { name: '直径 5', art: <>{ring(26, 29, 15)}<P d="M5 45L46 13H60" c={CYAN} /><Arrow p={[5, 45, 13, 38]} c={CYAN} /><Arrow p={[46, 13, 38, 19]} c={CYAN} /><Arrow p={[15, 18, 37, 40]} c={RED} both /><Label x={46} y={11} t="ø15" s={7} /><Label x={24} y={25} t="ø16" r={45} s={7} /></> },
  { name: '小尺寸', art: <><P d="M7 32H55M25 28V41M37 28V41M31 31L33 19H46" c={RED} /><Arrow p={[7, 32, 25, 32]} c={RED} s={8} /><Arrow p={[55, 32, 37, 32]} c={RED} s={8} /><Label x={33} y={17} t="15" s={12} /></> },
  { name: '倒角', art: <><P d="M15 23H43L47 27V41" c={GREY} /><P d="M17 18H39L45 24" c={GREEN} /><Label x={16} y={16} t="2x45°" s={10} /></> },
  { name: '锥度', art: <><P d="M13 26V41H43V21L19 26" c={GREY} /><P d="M19 26L22 17H38" c={GREEN} /><Label x={21} y={16} t="∠1:8" s={8} /></> },
  { name: '交点', art: <><P d="M13 12L42 36L55 21M45 7L22 37L3 24" c={CYAN} /><Arrow p={[8, 27, 15, 14]} c={CYAN} both s={5} /><Arrow p={[42, 11, 54, 21]} c={CYAN} both s={5} /><P d="M15 47L22 37L42 36L55 47" c={GREY} /><Label x={8} y={22} t="10" r={-55} s={8} /><Label x={45} y={11} t="10" r={40} s={8} /></> },
  { name: '宽度 1', art: <><P d="M26 23H41V41H26Z" c={GREY} /><P d="M26 16V23M41 16V23" c={GREEN} /><Arrow p={[19, 17, 26, 17]} c={GREEN} s={5} /><Arrow p={[48, 17, 41, 17]} c={GREEN} s={5} /><Label x={31} y={21} t="9" s={10} /></> },
  { name: '宽度 2', art: <><P d="M19 25H35V41H19Z" c={GREY} /><P d="M19 17V25M35 17V25M10 19H51" c={GREEN} /><Arrow p={[10, 19, 19, 19]} c={GREEN} s={5} /><Label x={45} y={17} t="9" s={11} /></> },
  { name: '点距', art: <><P d="M11 13V40M53 13V40" c="#e8d800" dash="8 1" /><Arrow p={[12, 22, 53, 22]} c={RED} both s={8} /><P d="M6 28L17 37M16 28L6 38M5 33H17M48 29L59 38M58 29L48 39M47 34H59" c={GREY} /><Label x={23} y={18} t="100" s={11} /></> },
  { name: '角度', art: <><P d="M51 38H3L40 6" c={GREY} /><P d="M37 9Q47 20 47 37" c={CYAN} /><Arrow p={[40, 13, 36, 8]} c={CYAN} s={5} /><Arrow p={[47, 32, 47, 38]} c={CYAN} s={5} /><Label x={47} y={17} t="45°" r={65} s={8} /></> },
  { name: '并列', art: <><P d="M6 6V45M48 8V36M55 6V45" c={CYAN} /><Arrow p={[6, 19, 41, 19]} c={CYAN} both s={5} /><Arrow p={[6, 31, 48, 31]} c={CYAN} both s={5} /><Arrow p={[6, 42, 55, 42]} c={CYAN} both s={5} /><Label x={21} y={17} t="A" s={7} /><Label x={25} y={29} t="B" s={7} /><Label x={28} y={40} t="C" s={7} /></> },
  { name: '连续', art: <><P d="M3 6V38M20 6V38M42 6V38M61 6V38" c={CYAN} /><Arrow p={[3, 33, 20, 33]} c={CYAN} both s={5} /><Arrow p={[20, 33, 42, 33]} c={CYAN} both s={5} /><Arrow p={[42, 33, 61, 33]} c={CYAN} both s={5} /><Label x={8} y={31} t="A" /><Label x={28} y={31} t="B" /><Label x={48} y={31} t="C" /></> },
  { name: '高度 1', art: <><P d="M15 36V18H29" c={GREY} /><P d="M29 18H56" c={GREEN} /><Arrow p={[47, 8, 47, 17]} c={GREEN} s={5} /><Arrow p={[47, 46, 47, 36]} c={GREEN} s={5} /><Label x={51} y={30} t="5" r={-90} s={12} /></> },
  { name: '高度 2', art: <><P d="M13 20H28V37H13Z" c={GREY} /><P d="M28 20H54M28 37H54M47 20V37" c={GREEN} /><Arrow p={[47, 9, 47, 20]} c={GREEN} s={5} /><Arrow p={[47, 48, 47, 37]} c={GREEN} s={5} /><Label x={43} y={16} t="5" r={-90} s={13} /></> },
  { name: '对齐', art: <><P d="M5 6H60" c={MAG} dash="15 5" /><P d="M5 43H60" c={MAG} dash="8 2" w={2} /><Arrow p={[21, 31, 21, 14]} c={CYAN} /><Arrow p={[47, 19, 47, 36]} c={CYAN} /></> },
];

const Centered = styled.div`
  display: flex;
  justify-content: center;
  font-size: 11px;
`;

const Toolbox = () => (
  <Frame>
    <Surface $h={322}>
      <TitleBar $h={25} $size={11}><h2>标注工具箱:</h2><CloseX s={8} /></TitleBar>
      <ToolboxBody>
        <Group>
          <Legend $lh={12} $left={8}>特殊尺寸标注功能示例</Legend>
          <Thumbs>
            {samples.map(s => (
              <Thumb key={s.name} aria-label={s.name}><svg viewBox="0 0 65 54">{s.art}</svg></Thumb>
            ))}
          </Thumbs>
        </Group>
        <Centered><PushButton $w={42} $h={22} $main $focus>关闭</PushButton></Centered>
      </ToolboxBody>
    </Surface>
  </Frame>
);

/* ---------- tolerance lookup ---------- */

const LookupBody = styled.div`
  display: flex;
  flex: 1;
  font-size: 12px;
`;

const TabArea = styled.div`
  display: flex;
  flex-direction: column;
  flex: 405 1 0;
  min-width: 0;
`;

const Tabs = styled.div`
  display: flex;
  align-items: flex-end;
  height: 18px;
`;

const Tab = styled.button<{ $on?: boolean }>`
  height: ${p => (p.$on ? 18 : 16)}px;
  padding: 0 5px ${p => (p.$on ? 2 : 0)}px;
  border: 0;
  border-right: 1px solid #e2e2e2;
  background: ${p => (p.$on ? '#f9f9f9' : '#efefef')};
  line-height: 14px;
  white-space: nowrap;
`;

const TabPane = styled.div`
  display: flex;
  align-items: flex-start;
  min-height: 251px;
  border: 1px solid #e6e6e6;
  background: #f9f9f9;
`;

const Chart = styled.div`
  flex: 0 1 339px;
  min-width: 0;
  height: 218px;
  padding: 2px;
  border: 2px solid #909090;
  border-right: 3px solid #7d7d7d;
  border-bottom: 3px solid #7d7d7d;
  background: #c0c0c0;
`;

const ChartFrame = styled.div`
  display: flex;
  height: 100%;
  padding: 8px 8px 8px 7px;
  border: 1px solid #858585;
`;

const CellGrid = styled.div`
  flex: 1;
  display: grid;
  grid-template-columns: repeat(22, minmax(0, 1fr));
  grid-template-rows: repeat(13, minmax(0, 1fr));
`;

const Cell = styled.button<{ $c: number; $r: number; $kind: string; $len: number }>`
  display: flex;
  align-items: center;
  justify-content: center;
  grid-column: ${p => p.$c};
  grid-row: ${p => p.$r};
  min-width: 0;
  padding: 0;
  border: 0;
  box-shadow: inset 1px 1px 0 #999, 1px 1px 0 #e6e6e6;
  background: ${p => (p.$kind === 'b' ? '#00f' : p.$kind === 'r' ? '#f00' : '#c0c0c0')};
  color: ${p => (p.$kind === 'n' ? '#808080' : '#fff')};
  font-size: ${p => (p.$len > 3 ? 6 : p.$len > 2 ? 7 : 9)}px;
  line-height: 12px;
  white-space: nowrap;
`;

const ChartTitle = styled.div`
  grid-column: 14 / 23;
  grid-row: 1 / 4;
  display: flex;
  align-items: center;
  white-space: nowrap;
  font-size: 12px;
  padding-left: 4px;
`;

const KeyList = styled.div`
  grid-column: 14 / 23;
  grid-row: 11 / 14;
  display: flex;
  flex-direction: column;
  gap: 3px;
  padding-left: 3px;
`;

const KeyItem = styled.div<{ $c: string }>`
  display: flex;
  align-items: center;
  gap: 10px;
  line-height: 16px;
  white-space: nowrap;
  &::before { content: ''; width: 14px; height: 14px; background: ${p => p.$c}; }
`;

const letters = ['A', 'B', 'C', 'D', 'E', 'F', 'G', 'H', 'J', 'JS', 'K', 'M', 'N', 'P', 'R', 'S', 'T', 'U', 'V', 'X', 'Y', 'Z'];

/* One string per grade, one mark per letter: n plain, b common, r preferred. */
const grades = [
  '.......n.n............',
  '.......n.n............',
  '.......n.n............',
  '.......n.nnn..........',
  '......nn.nnnnnnn......',
  '.....bbbnbbbbbbbbnnnnn',
  '...nnbrrnbrbrrbrbrnnnn',
  '..nbbrnrnbbbbnnnnnnnnn',
  'nnnrbb.r.n..nn........',
  'nnnbn..b.n............',
  'bbrb...r.n............',
  'nbn....b.n............',
  '.......n.n............',
];

const SideFields = styled.div`
  display: flex;
  flex-direction: column;
  align-items: center;
  flex: 126 1 0;
  padding: 24px 0 0 30px;
`;

const FieldBlock = styled.div<{ $after: number }>`
  display: flex;
  flex-direction: column;
  gap: 2px;
  width: 67px;
  margin-bottom: ${p => p.$after}px;
`;

const Deviation = styled.label`
  display: flex;
  align-items: center;
  justify-content: space-between;
  width: 95px;
  margin-bottom: 5px;
  white-space: nowrap;
  input { width: 47px; }
`;

const Readings = styled.div`
  input { font-size: 11px; }
`;

const Actions = styled.div`
  display: flex;
  flex-direction: column;
  gap: 22px;
  margin-top: 34px;
  font-size: 11px;
`;

const LookupDialog = () => (
  <Frame>
    <Surface $h={325}>
      <TitleBar $h={31} $size={12}><Logo s={16} /><h2>公差查询</h2><CloseX s={10} /></TitleBar>
      <LookupBody>
        <TabArea>
          <Tabs role="tablist">
            <Tab>轴公差</Tab><Tab $on>孔公差</Tab><Tab>基轴配合公差</Tab><Tab>基孔配合公差</Tab>
          </Tabs>
          <TabPane>
            <Chart>
              <ChartFrame>
                <CellGrid>
                  {grades.flatMap((row, r) => row.split('').map((k, c) => (
                    k === '.' ? null : (
                      <Cell key={`${r}-${c}`} $c={c + 1} $r={r + 1} $kind={k} $len={`${letters[c]}${r + 1}`.length}>
                        {`${letters[c]}${r + 1}`}
                      </Cell>
                    )
                  )))}
                  <ChartTitle>尺寸范围不大于<b>500</b></ChartTitle>
                  <KeyList>
                    <KeyItem $c="#00f">常用公差带</KeyItem>
                    <KeyItem $c="#f00">优先选用公差带</KeyItem>
                  </KeyList>
                </CellGrid>
              </ChartFrame>
            </Chart>
          </TabPane>
        </TabArea>
        <SideFields>
          <FieldBlock $after={11}>
            <Sunken $h={24}>基本尺寸</Sunken>
            <Field $h={19} disabled aria-label="基本尺寸" defaultValue="100" />
          </FieldBlock>
          <FieldBlock $after={9}>
            <Sunken $h={24}>公差代号</Sunken>
            <Field $h={19} $under aria-label="公差代号" defaultValue="H7" />
          </FieldBlock>
          <Readings>
            <Deviation>上偏差: <Field $h={19} $under defaultValue="0.035" /></Deviation>
            <Deviation>下偏差: <Field $h={19} $under defaultValue="0" /></Deviation>
          </Readings>
          <Actions>
            <PushButton $w={78} $h={20} $main>确认</PushButton>
            <PushButton $w={78} $h={20}>取消</PushButton>
          </Actions>
        </SideFields>
      </LookupBody>
    </Surface>
  </Frame>
);

export default function App() {
  return (
    <>
      <GlobalStyle />
      <Page>
        <Toolbar aria-label="Dimension tools">
          {toolIcons.map((icon, i) => (icon === null
            ? <Split key={i} />
            : <Tool key={i} aria-label={`Tool ${i + 1}`}><svg width="28" height="28" viewBox="0 0 28 28">{icon}</svg></Tool>
          ))}
        </Toolbar>
        <TopRow>
          <Slot $w={273} $drop={3} $after={35}><SheetDialog /></Slot>
          <Slot $w={379} $after={25}><ContentDialog /></Slot>
          <Slot $w={325}><Sheet /></Slot>
        </TopRow>
        <BottomRow>
          <Slot $w={460} $drop={3}><Toolbox /></Slot>
          <Slot $w={563}><LookupDialog /></Slot>
        </BottomRow>
      </Page>
    </>
  );
}
